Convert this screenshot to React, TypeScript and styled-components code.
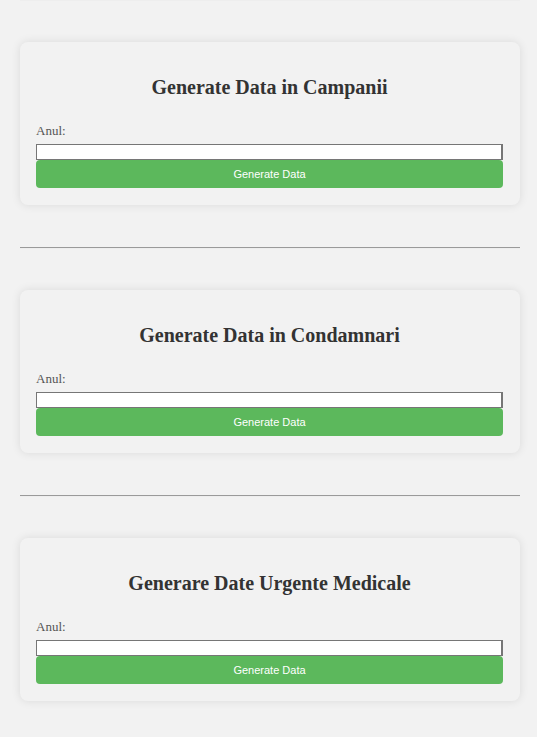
import React from "react";
import styled, { createGlobalStyle } from "styled-components";

const Global = createGlobalStyle`
  html, body {
    margin: 0;
    padding: 0;
    background: #f2f2f2;
  }
  body {
    font-family: "Liberation Serif", "Times New Roman", serif;
  }
`;

const Page = styled.div`
  display: flex;
  flex-direction: column;
  gap: 41px;
  padding: 0 17px 40px 20px;
`;

const Rule = styled.hr<{ $first?: boolean }>`
  margin: ${(p) => (p.$first ? "-1px 0 0" : "1px 0 0")};
  height: 0;
  border: none;
  border-top: 1px solid #9a9a9a;
  border-bottom: 1px solid #eeeeee;
`;

const Card = styled.section`
  background: #f2f2f2;
  border-radius: 8px;
  box-shadow: 0 0 10px rgba(0, 0, 0, 0.1);
  padding: 16px 17px 17px 16px;
  display: flex;
  flex-direction: column;
`;

const Title = styled.h2`
  margin: 18px 0 24px;
  font-family: "Liberation Serif", "Times New Roman", serif;
  font-size: 20px;
  line-height: 23px;
  font-weight: bold;
  color: #333;
  text-align: center;
`;

const Form = styled.form`
  display: flex;
  flex-direction: column;
`;

const Label = styled.label`
  font-family: "Liberation Serif", "Times New Roman", serif;
  font-size: 13px;
  line-height: 15px;
  color: #555;
  margin-bottom: 6px;
`;

const Input = styled.input`
  box-sizing: border-box;
  height: 16px;
  width: 100%;
  margin: 0;
  padding: 0 2px;
  background: #fff;
  border: 1px solid #767676;
  border-right-width: 2px;
  font-size: 11px;
`;

const Button = styled.button`
  box-sizing: border-box;
  height: 28px;
  width: 100%;
  margin: 0;
  border: none;
  border-radius: 4px;
  background: #5cb85c;
  color: #fff;
  font-family: "Liberation Sans", Arial, sans-serif;
  font-size: 11px;
  cursor: pointer;
`;

const sections = [
  "Generate Data in Campanii",
  "Generate Data in Condamnari",
  "Generare Date Urgente Medicale",
];

export default function App() {
  return (
    <>
      <Global />
      <Page>
        {sections.map((title, i) => (
          <React.Fragment key={title}>
            <Rule $first={i === 0} />
            <Card>
              <Title>{title}</Title>
              <Form onSubmit={(e) => e.preventDefault()}>
                <Label htmlFor={`anul-${i}`}>Anul:</Label>
                <Input id={`anul-${i}`} type="text" />
                <Button type="submit">Generate Data</Button>
              </Form>
            </Card>
          </React.Fragment>
        ))}
      </Page>
    </>
  );
}
